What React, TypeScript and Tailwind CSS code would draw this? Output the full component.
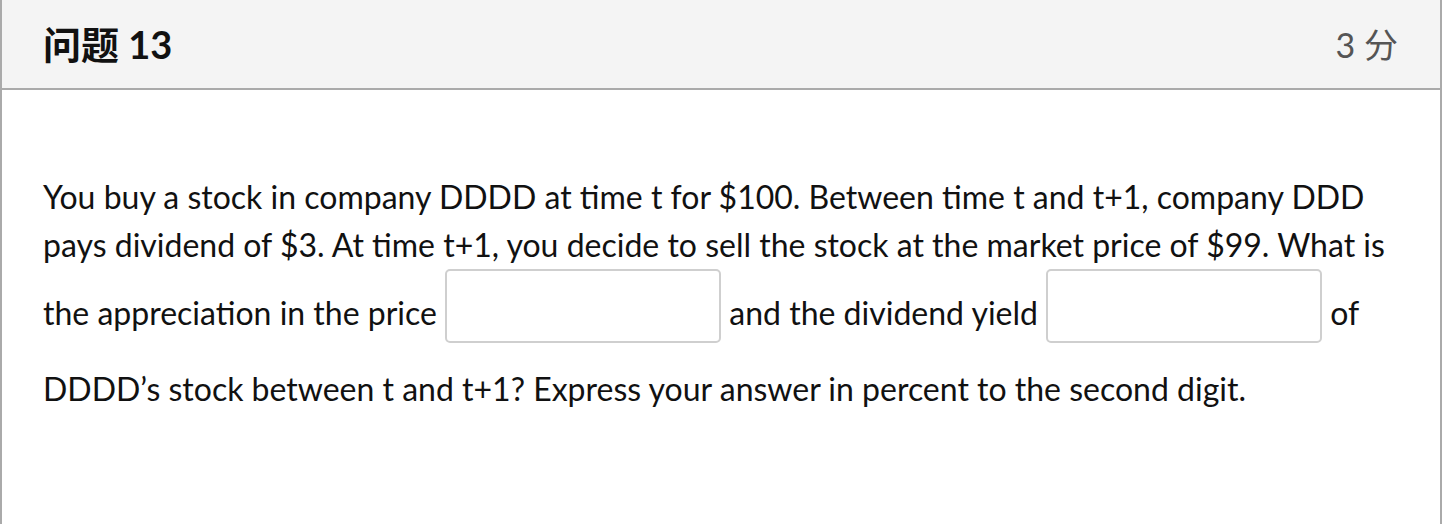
import React from 'react';

function Blank() {
  return (
    <input
      type="text"
      aria-label="answer"
      className="mb-[22px] inline-block h-[74px] w-[276px] rounded-[5px] border-2 border-[#cfcfcf] bg-white align-middle outline-none"
    />
  );
}

export default function App() {
  return (
    <div className="h-[524px] w-[1442px] border-x-2 border-[#aaaaaa] bg-white font-['Lato','Noto_Sans_CJK_SC',sans-serif] text-[#111]">
      {/* Header */}
      <div className="flex h-[90px] items-center justify-between border-b-2 border-[#aaaaaa] bg-[#f4f4f4] pl-[41px] pr-[42px]">
        <h2 className="text-[38px] font-bold">问题 13</h2>
        <div className="text-[34px] text-[#555]">3 分</div>
      </div>

      {/* Question body */}
      <div className="pl-[41px] pr-[46px] pt-[83px] text-[32px] leading-[48px]">
        <p>
          You buy a stock in company DDDD at time t for $100. Between time t and t+1, company DDD pays dividend of $3. At
          time t+1, you decide to sell the stock at the market price of $99. What is the appreciation in the price{' '}
          <Blank /> and the dividend yield <Blank /> of DDDD’s stock between t and t+1? Express your answer in percent to
          the second digit.
        </p>
      </div>
    </div>
  );
}
